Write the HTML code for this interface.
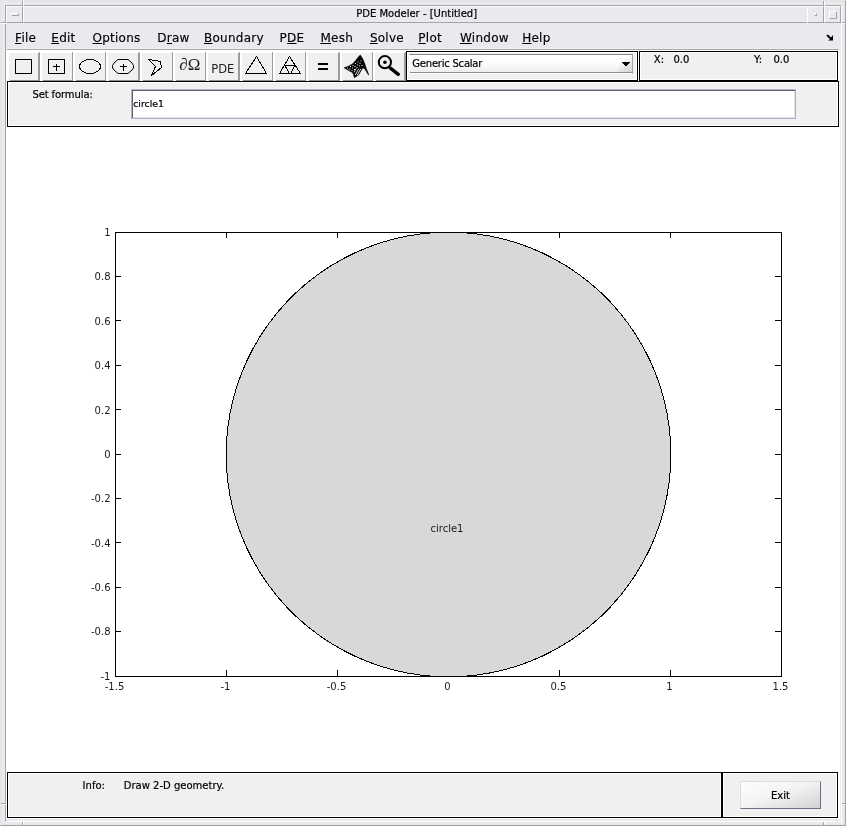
<!DOCTYPE html>
<html><head><meta charset="utf-8"><title>PDE Modeler - [Untitled]</title>
<style>
html,body{margin:0;padding:0}
body{width:846px;height:826px;position:relative;overflow:hidden;background:#ebe9ed;font-family:"DejaVu Sans","Liberation Sans",sans-serif;color:#000}
div,span{position:absolute;box-sizing:border-box}
.outer{left:0;top:0;width:846px;height:826px;border:2px solid #e5e5e5}
.outer2{left:0;top:0;width:846px;height:826px;border:1px solid;border-color:transparent #a2a2a2 #a2a2a2 transparent}
.frame{left:5px;top:5px;width:837px;height:817px;background:#ebe9ed;border:1px solid;border-color:#a4a4a8 #fff #fff #a4a4a8}
.bev{background:#ebe9ed;border:1px solid;border-color:#fff #a4a4a8 #a4a4a8 #fff}
.nv{width:2px;height:5px;border-left:1px solid #a4a4a8;border-right:1px solid #fff}
.nh{width:5px;height:2px;border-top:1px solid #a4a4a8;border-bottom:1px solid #fff}
.title{left:23px;top:6px;width:784px;height:17px}
.ttxt{left:356.2px;top:8px;font-size:10px;line-height:12px;white-space:nowrap;color:#000;-webkit-text-stroke:0.2px #000}
.menubar{left:7px;top:48px;width:832px;height:2px;border-top:1px solid #f0eef2;border-bottom:1px solid #a9a9ad}
.mi{top:30px;line-height:16px;white-space:nowrap;color:#000;-webkit-text-stroke:0.15px #000;font-size:12px;letter-spacing:0.25px}
.mi u{text-decoration:underline;text-underline-offset:0.5px;text-decoration-thickness:1px}
.client{left:6px;top:50px;width:834px;height:769px;background:#fff}
.tb{top:53px;width:29px;height:27px;background:#f0f0f0}
.ic{position:absolute;top:53px}
.ts{top:53px;height:27px;background:#9c9c9c}
.tp{top:52px;width:1px;height:1px;background:#a8a8a8}
.ts2{top:80px;width:30px;height:1px;background:#8c8c8c}
.panel{background:#f0f0f0;border:1px solid #000;box-shadow:inset 0 0 0 1px #fff}
.lbl{font-size:10px;line-height:12px;white-space:nowrap;color:#000;-webkit-text-stroke:0.2px #000}
.plot{position:absolute;left:0;top:0}
#w{left:0;top:0;width:846px;height:826px;will-change:transform}
</style></head><body><div id="w">
<div class="outer"></div><div class="outer2"></div>
<div class="frame"></div>
<div class="nv" style="left:22px;top:1px"></div><div class="nv" style="left:823px;top:1px"></div>
<div class="nv" style="left:22px;top:822px;height:3px"></div><div class="nv" style="left:823px;top:822px;height:3px"></div>
<div class="nh" style="left:1px;top:22px"></div><div class="nh" style="left:842px;top:22px;width:3px"></div>
<div class="nh" style="left:1px;top:803px"></div><div class="nh" style="left:842px;top:803px;width:3px"></div>
<div class="bev" style="left:6px;top:6px;width:17px;height:17px"></div>
<div class="bev" style="left:11px;top:13px;width:8px;height:3px"></div>
<div class="bev title" style="border-right-color:#ebe9ed"></div>
<span class="ttxt">PDE Modeler - [Untitled]</span>
<div class="bev" style="left:807px;top:6px;width:17px;height:17px"></div>
<div class="bev" style="left:814px;top:13px;width:3px;height:3px"></div>
<div class="bev" style="left:824px;top:6px;width:17px;height:17px"></div>
<div class="bev" style="left:829px;top:11px;width:8px;height:8px"></div>
<div class="menubar"></div>
<span class="mi" style="left:15.1px"><u>F</u>ile</span><span class="mi" style="left:51.3px"><u>E</u>dit</span><span class="mi" style="left:92.5px"><u>O</u>ptions</span><span class="mi" style="left:157.3px">D<u>r</u>aw</span><span class="mi" style="left:204px"><u>B</u>oundary</span><span class="mi" style="left:279.6px">P<u>D</u>E</span><span class="mi" style="left:320.4px"><u>M</u>esh</span><span class="mi" style="left:369.9px"><u>S</u>olve</span><span class="mi" style="left:418.3px"><u>P</u>lot</span><span class="mi" style="left:460px"><u>W</u>indow</span><span class="mi" style="left:522.2px"><u>H</u>elp</span>
<svg style="position:absolute;left:826px;top:34px" width="8" height="7" viewBox="0 0 8 7"><path d="M0.5 1.5 L2 0.5 L5 3.5 L7 1 V6.5 H2 L4 5 L1 2.5Z" fill="#000"/></svg>
<div class="client"></div>
<div class="tb" style="left:9px;width:29px"></div><div class="ts" style="left:38px;width:2px"></div><div class="tp" style="left:39px"></div><div class="ts2" style="left:10px;width:30px"></div><svg class="ic" style="left:9px" width="29" height="27" viewBox="0 0 29 27"><rect x="6.5" y="6.5" width="16" height="14" fill="none" stroke="#000"/></svg><div class="tb" style="left:42px;width:30px"></div><div class="ts" style="left:72px;width:1px"></div><div class="tp" style="left:72px"></div><div class="ts2" style="left:43px;width:30px"></div><svg class="ic" style="left:42px" width="29" height="27" viewBox="0 0 29 27"><rect x="6.5" y="6.5" width="16" height="14" fill="none" stroke="#000"/><path d="M11 13.5h7M14.5 11v7" stroke="#000" fill="none"/></svg><div class="tb" style="left:75px;width:30px"></div><div class="ts" style="left:105px;width:1px"></div><div class="tp" style="left:105px"></div><div class="ts2" style="left:76px;width:30px"></div><svg class="ic" style="left:75px" width="29" height="27" viewBox="0 0 29 27"><ellipse cx="15" cy="13.5" rx="10.5" ry="7" fill="none" stroke="#000" shape-rendering="crispEdges"/></svg><div class="tb" style="left:108px;width:30px"></div><div class="ts" style="left:138px;width:2px"></div><div class="tp" style="left:139px"></div><div class="ts2" style="left:109px;width:31px"></div><svg class="ic" style="left:109px" width="29" height="27" viewBox="0 0 29 27"><polygon points="9,6.5 19,6.5 23,10.0 24.5,12.5 24.5,15.0 23,17.0 19,20.5 9,20.5 5,17.0 3.5,15.0 3.5,12.5 5,10.0" fill="none" stroke="#000" stroke-linejoin="round"/><path d="M11 13.5h7M14.5 11v7" stroke="#000" fill="none"/></svg><div class="tb" style="left:142px;width:30px"></div><div class="ts" style="left:172px;width:1px"></div><div class="tp" style="left:172px"></div><div class="ts2" style="left:143px;width:30px"></div><svg class="ic" style="left:142px" width="29" height="27" viewBox="0 0 29 27"><path d="M6.5 6.5 L18.5 8.5 L19.5 14.5 L9.5 22.5 L13.5 13.5 Z" fill="none" stroke="#000" shape-rendering="crispEdges"/></svg><div class="tb" style="left:175px;width:30px"></div><div class="ts" style="left:205px;width:1px"></div><div class="tp" style="left:205px"></div><div class="ts2" style="left:176px;width:30px"></div><svg class="ic" style="left:175px" width="29" height="27" viewBox="0 0 29 27"><text x="14.8" y="17.3" text-anchor="middle" font-family="'Liberation Serif', serif" font-size="17" fill="#1a1a1a">∂Ω</text></svg><div class="tb" style="left:208px;width:30px"></div><div class="ts" style="left:238px;width:2px"></div><div class="tp" style="left:239px"></div><div class="ts2" style="left:209px;width:31px"></div><svg class="ic" style="left:209px" width="29" height="27" viewBox="0 0 29 27"><text x="13.8" y="20" text-anchor="middle" font-family="'DejaVu Sans', 'Liberation Sans', sans-serif" font-size="11.5" fill="#222">PDE</text></svg><div class="tb" style="left:242px;width:30px"></div><div class="ts" style="left:272px;width:1px"></div><div class="tp" style="left:272px"></div><div class="ts2" style="left:243px;width:30px"></div><svg class="ic" style="left:242px" width="29" height="27" viewBox="0 0 29 27"><path d="M14.5 3.5 L24.5 20.5 L3.5 20.5 Z" fill="none" stroke="#000" shape-rendering="crispEdges"/></svg><div class="tb" style="left:275px;width:30px"></div><div class="ts" style="left:305px;width:1px"></div><div class="tp" style="left:305px"></div><div class="ts2" style="left:276px;width:30px"></div><svg class="ic" style="left:275px" width="29" height="27" viewBox="0 0 29 27"><path d="M14.5 3.5 L25.5 20.5 L4.5 20.5 Z M9.5 12.5 H20.5 M10 12.5 L14.3 20.5 M20 12.5 L15.7 20.5" fill="none" stroke="#000" shape-rendering="crispEdges"/></svg><div class="tb" style="left:308px;width:30px"></div><div class="ts" style="left:338px;width:2px"></div><div class="tp" style="left:339px"></div><div class="ts2" style="left:309px;width:31px"></div><svg class="ic" style="left:309px" width="29" height="27" viewBox="0 0 29 27"><path d="M9 11h10M9 16h10" stroke="#000" stroke-width="2" fill="none" shape-rendering="crispEdges"/></svg><div class="tb" style="left:342px;width:30px"></div><div class="ts" style="left:372px;width:1px"></div><div class="tp" style="left:372px"></div><div class="ts2" style="left:343px;width:30px"></div><svg class="ic" style="left:342px" width="29" height="27" viewBox="0 0 29 27"><path d="M2.2 14.8 L6.8 13.1 L10.9 10.7 L13.8 7.3 L16.7 3.6 L18.3 2.1 L20.8 6.1 L22.9 11.1 L24.3 15.5 L26.8 21.8 L26.2 21.6 L23.2 16.6 L21.8 15 L20.4 15.4 L16.7 21.8 L12.5 24.7 L11.3 21 L9.7 18.9 L6.8 17.7 Z" fill="#000" stroke="#000" stroke-width="0.6" stroke-linejoin="round"/><path d="M13.2 22 l3.6-6.4 M15.2 22.2 l3.6-6.4 M11.8 19.4 l2.4-4" stroke="#f0f0f0" stroke-width="0.9" fill="none"/><g fill="#f0f0f0"><rect x="5" y="14.5" width="1" height="1"/><rect x="7.5" y="15.5" width="1" height="1"/><rect x="8" y="13" width="1" height="1"/><rect x="10" y="14.5" width="1" height="1"/><rect x="10.5" y="12" width="1" height="1"/><rect x="12.5" y="13" width="1" height="1"/><rect x="13" y="10" width="1" height="1"/><rect x="15" y="11.5" width="1" height="1"/><rect x="15.5" y="8.5" width="1" height="1"/><rect x="9.5" y="17" width="1" height="1"/><rect x="17.5" y="10" width="1" height="1"/><rect x="12" y="16" width="1" height="1"/><rect x="6.5" y="16.5" width="1" height="1"/><rect x="14.5" y="14" width="1" height="1"/><rect x="17" y="12.5" width="1" height="1"/><rect x="18.5" y="7.5" width="1" height="1"/><rect x="19.5" y="12" width="1" height="1"/></g></svg><div class="tb" style="left:375px;width:29px"></div><div class="ts" style="left:404px;width:2px"></div><div class="tp" style="left:405px"></div><div class="ts2" style="left:376px;width:30px"></div><svg class="ic" style="left:375px" width="29" height="27" viewBox="0 0 29 27"><circle cx="9.9" cy="9.2" r="6.1" fill="none" stroke="#000" stroke-width="2"/><circle cx="9.9" cy="9.2" r="1.8" fill="#000"/><path d="M15.4 15.2 L23.3 21.3" stroke="#000" stroke-width="3.4" stroke-linecap="round"/></svg>
<div class="panel" style="left:406px;top:51px;width:232px;height:30px"></div>
<div style="left:409px;top:54px;width:224px;height:20px;background:linear-gradient(#fff 0,#fff 35%,#ececec 100%);border:1px solid;border-color:#858585 #a4a4a4 #fff #fcfcfc"></div>
<div style="left:410px;top:72px;width:223px;height:1px;background:#8e8e8e"></div>
<div style="left:618px;top:55px;width:14px;height:17px;background:linear-gradient(135deg,rgba(255,255,255,0) 30%,rgba(200,200,200,0.7) 100%)"></div>
<span class="lbl" style="left:412.3px;top:58px;color:#000;letter-spacing:-0.22px">Generic Scalar</span>
<svg style="position:absolute;left:622px;top:62px" width="8" height="4" viewBox="0 0 8 4" shape-rendering="crispEdges"><path d="M0 0H8V1H7V2H6V3H5V4H3V3H2V2H1V1H0Z" fill="#000"/></svg>
<div class="panel" style="left:639px;top:51px;width:199px;height:30px"></div>
<span class="lbl" style="left:653.8px;top:54px">X:</span><span class="lbl" style="left:673.5px;top:54px">0.0</span>
<span class="lbl" style="left:754px;top:54px">Y:</span><span class="lbl" style="left:773.5px;top:54px">0.0</span>
<div class="panel" style="left:7px;top:81px;width:832px;height:46px"></div>
<span class="lbl" style="left:32.4px;top:89px;letter-spacing:-0.1px">Set formula:</span>
<div style="left:131px;top:89px;width:665px;height:30px;background:#fff;border:1px solid;border-color:#aeb3ca #adb1c8 #adb1c8 #aeb3ca;box-shadow:inset 1px 1px 0 #5c6070,inset -1px -1px 0 #e0e2ec"></div>
<span class="lbl" style="left:133.2px;top:98px;font-size:9.4px;color:#000">circle1</span>
<svg class="plot" width="846" height="826" viewBox="0 0 846 826">
<g shape-rendering="crispEdges" stroke="#000" stroke-width="1" fill="none">
<line x1="226.5" y1="232.5" x2="226.5" y2="238"/>
<line x1="226.5" y1="676" x2="226.5" y2="670"/>
<line x1="337.5" y1="232.5" x2="337.5" y2="238"/>
<line x1="337.5" y1="676" x2="337.5" y2="670"/>
<line x1="448.5" y1="232.5" x2="448.5" y2="238"/>
<line x1="448.5" y1="676" x2="448.5" y2="670"/>
<line x1="559.5" y1="232.5" x2="559.5" y2="238"/>
<line x1="559.5" y1="676" x2="559.5" y2="670"/>
<line x1="670.5" y1="232.5" x2="670.5" y2="238"/>
<line x1="670.5" y1="676" x2="670.5" y2="670"/>
<line x1="115.5" y1="276.5" x2="121" y2="276.5"/>
<line x1="781" y1="276.5" x2="775" y2="276.5"/>
<line x1="115.5" y1="320.5" x2="121" y2="320.5"/>
<line x1="781" y1="320.5" x2="775" y2="320.5"/>
<line x1="115.5" y1="365.5" x2="121" y2="365.5"/>
<line x1="781" y1="365.5" x2="775" y2="365.5"/>
<line x1="115.5" y1="409.5" x2="121" y2="409.5"/>
<line x1="781" y1="409.5" x2="775" y2="409.5"/>
<line x1="115.5" y1="454.5" x2="121" y2="454.5"/>
<line x1="781" y1="454.5" x2="775" y2="454.5"/>
<line x1="115.5" y1="498.5" x2="121" y2="498.5"/>
<line x1="781" y1="498.5" x2="775" y2="498.5"/>
<line x1="115.5" y1="542.5" x2="121" y2="542.5"/>
<line x1="781" y1="542.5" x2="775" y2="542.5"/>
<line x1="115.5" y1="587.5" x2="121" y2="587.5"/>
<line x1="781" y1="587.5" x2="775" y2="587.5"/>
<line x1="115.5" y1="631.5" x2="121" y2="631.5"/>
<line x1="781" y1="631.5" x2="775" y2="631.5"/>
</g>
<polygon points="670.85,454.50 670.41,440.54 669.10,426.63 666.91,412.84 663.86,399.20 659.97,385.79 655.24,372.65 649.69,359.83 643.35,347.38 636.24,335.36 628.38,323.81 619.82,312.77 610.59,302.29 600.71,292.41 590.23,283.18 579.19,274.62 567.64,266.76 555.62,259.65 543.17,253.31 530.35,247.76 517.21,243.03 503.80,239.14 490.16,236.09 476.37,233.90 462.46,232.59 448.50,232.15 434.54,232.59 420.63,233.90 406.84,236.09 393.20,239.14 379.79,243.03 366.65,247.76 353.83,253.31 341.38,259.65 329.36,266.76 317.81,274.62 306.77,283.18 296.29,292.41 286.41,302.29 277.18,312.77 268.62,323.81 260.76,335.36 253.65,347.38 247.31,359.83 241.76,372.65 237.03,385.79 233.14,399.20 230.09,412.84 227.90,426.63 226.59,440.54 226.15,454.50 226.59,468.46 227.90,482.37 230.09,496.16 233.14,509.80 237.03,523.21 241.76,536.35 247.31,549.17 253.65,561.62 260.76,573.64 268.62,585.19 277.18,596.23 286.41,606.71 296.29,616.59 306.77,625.82 317.81,634.38 329.36,642.24 341.38,649.35 353.83,655.69 366.65,661.24 379.79,665.97 393.20,669.86 406.84,672.91 420.63,675.10 434.54,676.41 448.50,676.85 462.46,676.41 476.37,675.10 490.16,672.91 503.80,669.86 517.21,665.97 530.35,661.24 543.17,655.69 555.62,649.35 567.64,642.24 579.19,634.38 590.23,625.82 600.71,616.59 610.59,606.71 619.82,596.23 628.38,585.19 636.24,573.64 643.35,561.62 649.69,549.17 655.24,536.35 659.97,523.21 663.86,509.80 666.91,496.16 669.10,482.37 670.41,468.46" fill="#d8d8d8" stroke="#000" stroke-width="1" shape-rendering="crispEdges"/>
<rect x="115.5" y="232.5" width="666" height="444" fill="none" stroke="#000" stroke-width="1" shape-rendering="crispEdges"/>
<g font-family="'DejaVu Sans', 'Liberation Sans', sans-serif" font-size="10" fill="#1a1a1a">
<text x="114.5" y="690" text-anchor="middle">-1.5</text>
<text x="225.5" y="690" text-anchor="middle">-1</text>
<text x="336.5" y="690" text-anchor="middle">-0.5</text>
<text x="447.5" y="690" text-anchor="middle">0</text>
<text x="558.5" y="690" text-anchor="middle">0.5</text>
<text x="669.5" y="690" text-anchor="middle">1</text>
<text x="780.5" y="690" text-anchor="middle">1.5</text>
<text x="110.5" y="236" text-anchor="end">1</text>
<text x="110.5" y="280" text-anchor="end">0.8</text>
<text x="110.5" y="325" text-anchor="end">0.6</text>
<text x="110.5" y="369" text-anchor="end">0.4</text>
<text x="110.5" y="414" text-anchor="end">0.2</text>
<text x="110.5" y="458" text-anchor="end">0</text>
<text x="110.5" y="502" text-anchor="end">-0.2</text>
<text x="110.5" y="547" text-anchor="end">-0.4</text>
<text x="110.5" y="591" text-anchor="end">-0.6</text>
<text x="110.5" y="635" text-anchor="end">-0.8</text>
<text x="110.5" y="680" text-anchor="end">-1</text>
<text x="447" y="532" text-anchor="middle">circle1</text>
</g>
</svg>
<div class="panel" style="left:7px;top:772px;width:715px;height:46px"></div>
<div class="panel" style="left:722px;top:772px;width:116px;height:46px"></div>
<span class="lbl" style="left:82.6px;top:780px">Info:</span>
<span class="lbl" style="left:123.8px;top:780px">Draw 2-D geometry.</span>
<div style="left:740px;top:781px;width:81px;height:28px;background:linear-gradient(160deg,#fcfcfc 0%,#f4f4f4 45%,#dcdcdc 85%,#cfcfcf 100%);border:1px solid;border-color:#dcdce6 #6e7286 #6e7286 #dcdce6"></div>
<span class="lbl" style="left:771px;top:790px;color:#000">Exit</span>
</div></body></html>
